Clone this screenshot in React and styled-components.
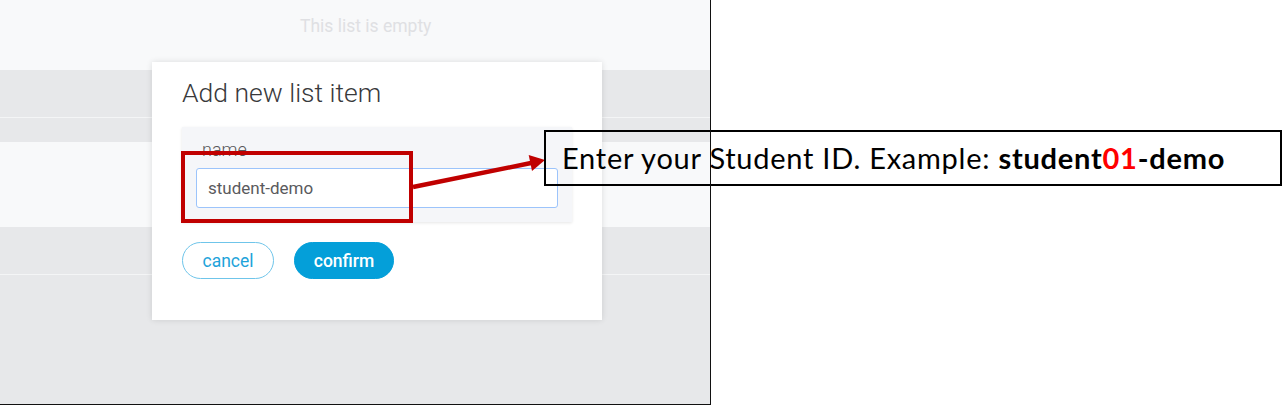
import React from "react";
import styled, { createGlobalStyle } from "styled-components";

const Global = createGlobalStyle`
  html, body { margin: 0; padding: 0; background: #ffffff; }
  body { font-family: Roboto, "Liberation Sans", Arial, sans-serif; }
  * { box-sizing: border-box; }
`;

const Page = styled.div`
  position: relative;
  width: 1283px;
  height: 405px;
  overflow: hidden;
  background: #ffffff;
`;

const Frame = styled.div`
  position: relative;
  width: 711px;
  height: 405px;
  display: flex;
  flex-direction: column;
  background: #f8f9fa;
  &::after {
    content: "";
    position: absolute;
    inset: 0;
    border-right: 1.5px solid #111;
    border-bottom: 1.5px solid #111;
    z-index: 5;
    pointer-events: none;
  }
`;

const LightBand = styled.div`
  height: ${(p) => p.$h}px;
  background: #f8f9fa;
  flex: none;
`;

const EmptyHeader = styled(LightBand)`
  display: flex;
  padding: 15px 0 0 300px;
  font-size: 17.5px;
  line-height: 22px;
  color: #dfe0e3;
`;

const GrayBand = styled.div`
  height: ${(p) => p.$h}px;
  background: #e7e8ea;
  flex: none;
  border-top: ${(p) => (p.$line ? "1.5px solid #f4f5f6" : "none")};
`;

const GrayFill = styled(GrayBand)`
  flex: 1;
`;

const Modal = styled.div`
  position: absolute;
  left: 152px;
  top: 62px;
  width: 450px;
  height: 258px;
  background: #ffffff;
  box-shadow: 0 0 6px rgba(0, 0, 0, 0.12);
  padding: 16px 30px 0 30px;
  display: flex;
  flex-direction: column;
  z-index: 2;
`;

const Title = styled.h2`
  margin: 0;
  font-family: Roboto, "Liberation Sans", sans-serif;
  font-weight: 300;
  font-size: 26.5px;
  line-height: 30px;
  color: #39393b;
`;

const Field = styled.div`
  margin-top: 19px;
  width: 390px;
  height: 95px;
  background: #f5f6f9;
  box-shadow: 0 1px 3px rgba(0, 0, 0, 0.1);
  padding: 12px 14px 14px 14px;
  display: flex;
  flex-direction: column;
`;

const Label = styled.label`
  font-size: 18px;
  line-height: 22px;
  font-weight: 300;
  color: #58585b;
  padding-left: 6px;
`;

const Input = styled.input`
  margin-top: 7px;
  height: 40px;
  width: 100%;
  border: 1.5px solid #9cc4fb;
  border-radius: 3px;
  background: #ffffff;
  padding: 0 11px;
  font-family: Roboto, "Liberation Sans", sans-serif;
  font-size: 17px;
  font-weight: 400;
  color: #5a5a5d;
  outline: none;
`;

const Actions = styled.div`
  margin-top: 20px;
  display: flex;
  gap: 20px;
`;

const Button = styled.button`
  height: 37px;
  width: ${(p) => p.$w}px;
  border-radius: 19px;
  font-family: Roboto, "Liberation Sans", sans-serif;
  font-size: 17.5px;
  font-weight: ${(p) => (p.$primary ? 500 : 400)};
  padding: 0;
  border: 1.5px solid ${(p) => (p.$primary ? "#049fd9" : "#6fc5ea")};
  background: ${(p) => (p.$primary ? "#049fd9" : "#ffffff")};
  color: ${(p) => (p.$primary ? "#ffffff" : "#1ea3da")};
`;

const Highlight = styled.div`
  position: absolute;
  left: 181px;
  top: 151px;
  width: 232px;
  height: 72px;
  border: 4.5px solid #c00000;
  z-index: 3;
  pointer-events: none;
`;

const Arrow = styled.svg`
  position: absolute;
  left: 0;
  top: 0;
  z-index: 4;
  pointer-events: none;
`;

const Callout = styled.div`
  position: absolute;
  left: 544px;
  top: 130px;
  width: 738px;
  height: 56px;
  border: 2px solid #000;
  display: flex;
  align-items: center;
  padding: 0 0 1px 16px;
  font-family: Lato, "Open Sans", sans-serif;
  font-size: 29px;
  letter-spacing: 0.75px;
  color: #000;
  white-space: nowrap;
  z-index: 4;
`;

const Strong = styled.b`
  font-weight: 700;
  color: ${(p) => p.$color || "#000"};
`;

export default function App() {
  return (
    <>
      <Global />
      <Page>
        <Frame>
          <EmptyHeader $h={70}>This list is empty</EmptyHeader>
          <GrayBand $h={47} />
          <GrayBand $h={25} $line />
          <LightBand $h={85} />
          <GrayBand $h={47} />
          <GrayFill $line />
          <Modal>
            <Title>Add new list item</Title>
            <Field>
              <Label>name</Label>
              <Input defaultValue="student-demo" />
            </Field>
            <Actions>
              <Button $w={92}>cancel</Button>
              <Button $w={100} $primary>
                confirm
              </Button>
            </Actions>
          </Modal>
        </Frame>
        <Highlight />
        <Arrow width="1283" height="405" viewBox="0 0 1283 405">
          <line x1="413" y1="187" x2="531" y2="163" stroke="#c00000" strokeWidth="4.5" />
          <polygon points="545,160 528.7,155 532,171" fill="#c00000" />
        </Arrow>
        <Callout>
          Enter your Student ID. Example:&nbsp;
          <Strong>student</Strong>
          <Strong $color="#ff0000">01</Strong>
          <Strong>-demo</Strong>
        </Callout>
      </Page>
    </>
  );
}
